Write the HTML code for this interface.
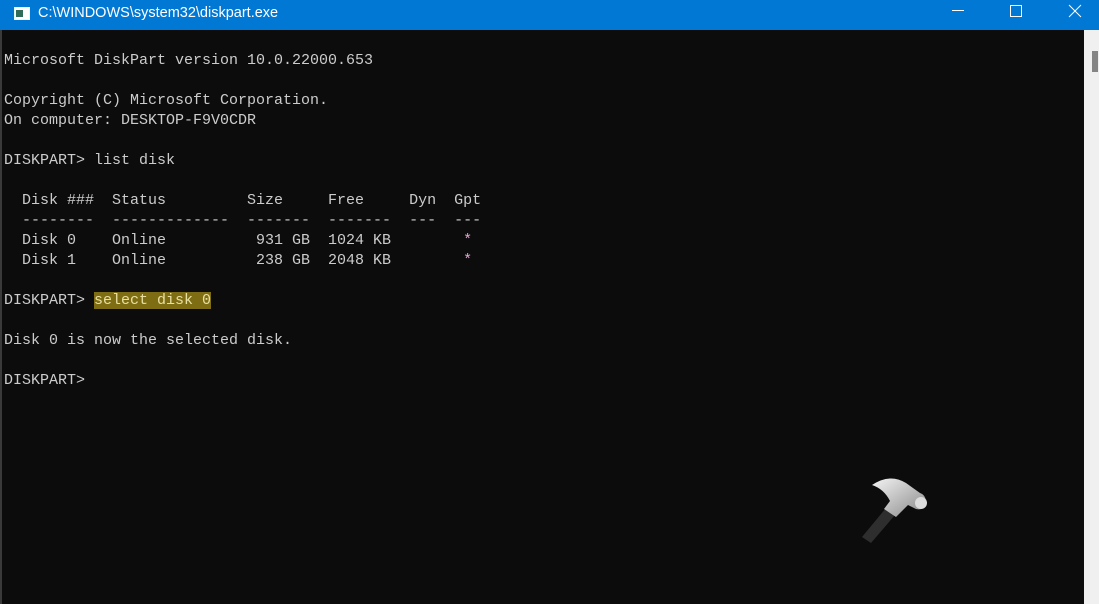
<!DOCTYPE html>
<html><head><style>
body{margin:0;width:1099px;height:604px;background:#0c0c0c;overflow:hidden;position:relative;font-family:"Liberation Sans",sans-serif}
.title{position:absolute;left:0;top:0;width:1099px;height:30px;background:#0078d4;color:#fff;font-size:14.5px}
.title .t{position:absolute;left:38px;top:5px}
.ico{position:absolute;left:14px;top:7px;width:14px;height:11px;border:1px solid #dfe;background:#fff}
.ico:after{content:"";position:absolute;left:1px;top:2px;width:7px;height:7px;background:#2f6c5a}
.con{position:absolute;left:4px;top:31px;font-family:"Liberation Mono",monospace;font-size:15px;line-height:20px;color:#cccccc;white-space:pre}
.hl{background:#7e6d12;color:#e8e0a0}
.pk{color:#e7a5d8}
.sb{position:absolute;left:1084px;top:30px;width:15px;height:574px;background:#f0f0f0}
.th{position:absolute;left:1092px;top:51px;width:6px;height:21px;background:#858585}
.lb{position:absolute;left:0;top:30px;width:2px;height:574px;background:#3a3a3a}
</style></head><body>
<div class="title"><div class="ico"></div><span class="t">C:\WINDOWS\system32\diskpart.exe</span>
<svg style="position:absolute;left:950px;top:0" width="149" height="30" fill="none" stroke="#fff" stroke-width="1">
<line x1="2" y1="10.5" x2="14" y2="10.5"/>
<rect x="60.5" y="5.5" width="11" height="11"/>
<line x1="119" y1="5" x2="131" y2="17"/><line x1="131" y1="5" x2="119" y2="17"/>
</svg></div>
<div class="lb"></div>
<div class="con">
Microsoft DiskPart version 10.0.22000.653

Copyright (C) Microsoft Corporation.
On computer: DESKTOP-F9V0CDR

DISKPART&gt; list disk

  Disk ###  Status         Size     Free     Dyn  Gpt
  --------  -------------  -------  -------  ---  ---
  Disk 0    Online          931 GB  1024 KB        <span class="pk">*</span>
  Disk 1    Online          238 GB  2048 KB        <span class="pk">*</span>

DISKPART&gt; <span class="hl">select disk 0</span>

Disk 0 is now the selected disk.

DISKPART&gt;
</div>
<svg style="position:absolute;left:850px;top:465px" width="90" height="90">
<defs><linearGradient id="g" x1="0" y1="0" x2="1" y2="1"><stop offset="0" stop-color="#f4f4f4"/><stop offset="1" stop-color="#888"/></linearGradient></defs>
<path d="M12 72 L36 43 L45 50 L21 78 Z" fill="#2e2e2e"/>
<path d="M34 44 L40 36 Q34 24 22 20 Q40 8 56 18 L70 28 Q76 30 76 38 Q74 46 66 44 L58 40 L46 52 Z" fill="url(#g)"/>
<circle cx="71" cy="38" r="6" fill="#ddd"/>
</svg>
<div class="sb"></div><div class="th"></div>
</body></html>
